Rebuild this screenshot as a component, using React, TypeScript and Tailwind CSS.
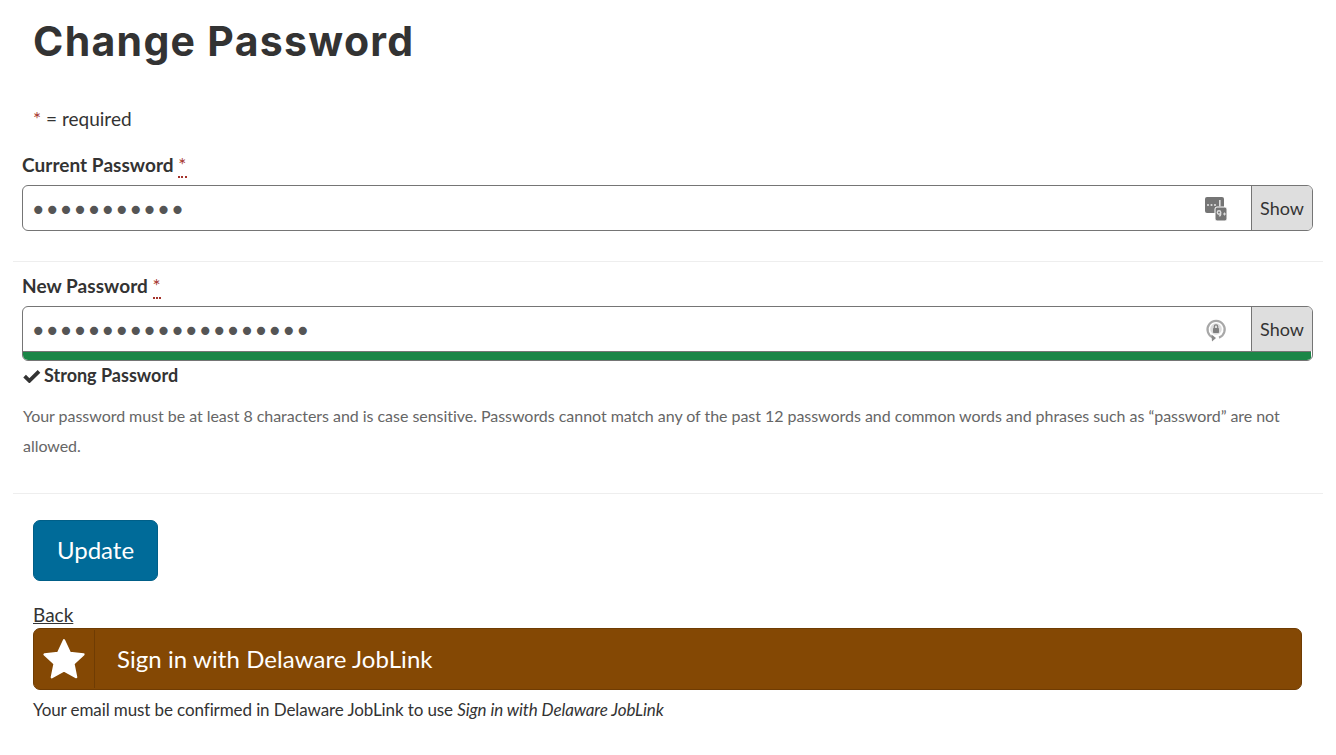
import React from "react";

function StrengthIcon() {
  return (
    <svg width="24" height="26" viewBox="0 0 24 26" className="shrink-0">
      <rect x="1" y="1" width="19" height="16" rx="2" fill="#757575" />
      <rect x="11" y="11" width="12" height="14" rx="2" fill="#757575" stroke="#fff" strokeWidth="1" />
      <circle cx="4" cy="9" r="1.1" fill="#ddd" />
      <circle cx="7.5" cy="9" r="1.1" fill="#ddd" />
      <circle cx="11" cy="9" r="1.1" fill="#ddd" />
      <rect x="15" y="4" width="1.6" height="6.5" fill="#ddd" />
      <circle cx="15" cy="16.5" r="1.7" fill="none" stroke="#ddd" strokeWidth="1.4" />
      <path d="M16.6 16.5v2.2c0 .7-.6 1.2-1.7 1.2" fill="none" stroke="#ddd" strokeWidth="1.4" />
      <path d="M19 18h3M20.5 16.5v3" stroke="#ddd" strokeWidth="1" />
    </svg>
  );
}

function GenerateIcon() {
  return (
    <svg width="22" height="24" viewBox="0 0 22 24" className="shrink-0">
      <path d="M8.2 19.6A8.6 8.6 0 1 1 14 19.6" fill="none" stroke="#a8a8a8" strokeWidth="2.2" />
      <path d="M6.5 16.5l4.5 3.5-4 3.5z" fill="#8a8a8a" />
      <circle cx="11" cy="11" r="5.8" fill="#dcdcdc" />
      <rect x="8" y="10" width="6" height="5" rx="0.8" fill="#808080" />
      <path d="M9.3 10V8.6a1.7 1.7 0 0 1 3.4 0V10" fill="none" stroke="#808080" strokeWidth="1.2" />
    </svg>
  );
}

function RequiredMark() {
  return (
    <abbr
      title="required"
      className="text-[#a5342c] no-underline border-b-2 border-dotted border-[#a5342c] leading-none font-normal"
    >
      *
    </abbr>
  );
}

function PasswordField({ value, icon, strong }: { value: string; icon: React.ReactNode; strong?: boolean }) {
  return (
    <div className="border border-[#757575] rounded-[6px] overflow-hidden bg-white">
      <div className="flex h-[44px]">
        <input
          type="password"
          readOnly
          value={value}
          className="flex-1 min-w-0 pl-[7px] pt-[5px] text-[#555555] text-[28px] tracking-[-2.6px] font-['DejaVu_Sans',sans-serif] outline-none"
        />
        <div className="w-[48px] flex items-center justify-center pr-[23px] pt-[2px]">{icon}</div>
        <div className="w-[61px] flex items-center justify-center bg-[#dedede] border-l border-[#757575] text-[18px] text-[#333333]">
          Show
        </div>
      </div>
      {strong && <div className="h-[8px] bg-[#1a8647] border-t border-[#757575] box-content mr-[1px]" />}
    </div>
  );
}

export default function App() {
  return (
    <div className="min-h-[755px] bg-white px-[13px] text-[18px] text-[#333333] font-['Lato','Open_Sans',sans-serif]">
      <h1 className="pl-[20px] pt-[15px] h-[53px] text-[41px] leading-[53px] font-bold font-['Inter',sans-serif] tracking-[1.3px] text-[#333333]">
        Change Password
      </h1>
      <p className="pl-[20px] mt-[54px] leading-[24px] text-[19px] tracking-[0.02px]">
        <span className="text-[#a5342c]">*</span> = required
      </p>

      <div className="pl-[9px] pr-[10px] mt-[22px] pb-[30px] border-b border-[#eeeeee]">
        <label className="block font-bold leading-[24px] mb-[8px] text-[19px] tracking-[0.05px]">
          Current Password <RequiredMark />
        </label>
        <PasswordField value="abcdefghijk" icon={<StrengthIcon />} />
      </div>

      <div className="pl-[9px] pr-[10px] pt-[12px] pb-[32px] border-b border-[#eeeeee]">
        <label className="block font-bold leading-[24px] mb-[8px] text-[19px] tracking-[0.05px]">
          New Password <RequiredMark />
        </label>
        <PasswordField value="abcdefghijklmnopqrst" icon={<GenerateIcon />} strong />
        <div className="flex items-center gap-[3px] mt-[1px] ml-[1px] font-bold leading-[27px]">
          <svg width="18" height="14" viewBox="0 0 18 14">
            <path d="M1.6 7.2l4.8 4.6L16 2.4" fill="none" stroke="#333333" strokeWidth="3.8" />
          </svg>
          Strong Password
        </div>
        <p className="mt-[12px] ml-[1px] text-[16px] leading-[30px] tracking-[-0.04px] text-[#666666]">
          Your password must be at least 8 characters and is case sensitive. Passwords cannot match any of the past 12
          passwords and common words and phrases such as “password” are not allowed.
        </p>
      </div>

      <div className="pl-[20px] pr-[21px]">
        <button className="mt-[26px] block w-[125px] h-[61px] pb-[2px] rounded-[7px] bg-[#006b99] border border-[#005f88] text-white text-[24px]">
          Update
        </button>
        <a className="block mt-[22px] underline leading-[24px] text-[19px] text-[#333333]">Back</a>
        <div className="flex h-[62px] mt-[1px] rounded-[7px] bg-[#844804] border border-[#6f3c03] text-white">
          <div className="w-[61px] border-r border-[#6f3c03] my-[1px] flex items-center justify-center">
            <svg width="44" height="42" viewBox="0 0 24 23">
              <path
                d="M12 1.2l3.2 6.9 7.5.9-5.5 5.1 1.5 7.4L12 17.8l-6.7 3.7 1.5-7.4L1.3 9l7.5-.9z"
                fill="#ffffff"
                stroke="#ffffff"
                strokeWidth="1.2"
                strokeLinejoin="round"
              />
            </svg>
          </div>
          <div className="flex items-center pl-[22px] text-[24px] tracking-[0.07px]">Sign in with Delaware JobLink</div>
        </div>
        <p className="mt-[8px] leading-[24px] text-[17px] tracking-[-0.1px]">
          Your email must be confirmed in Delaware JobLink to use <em>Sign in with Delaware JobLink</em>
        </p>
      </div>
    </div>
  );
}
